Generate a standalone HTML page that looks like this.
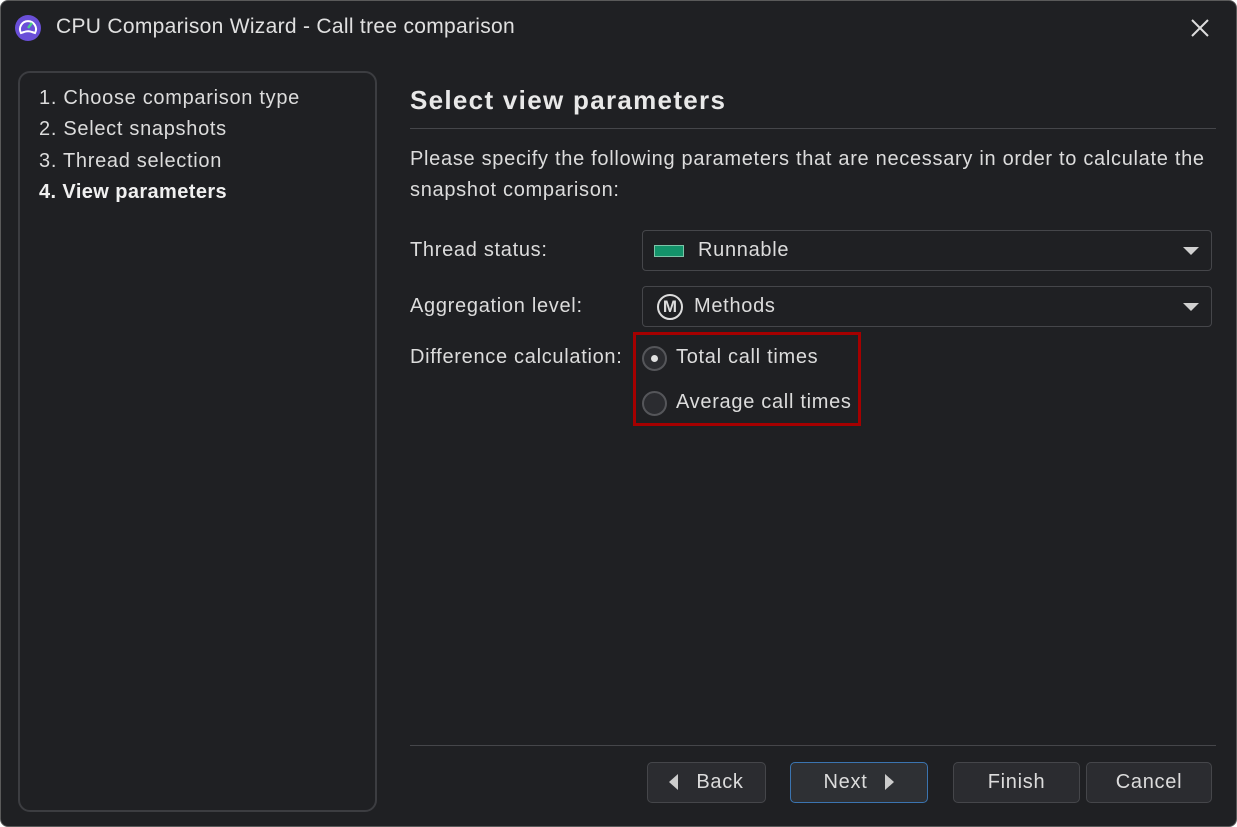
<!DOCTYPE html>
<html><head><meta charset="utf-8"><style>
*{box-sizing:border-box;margin:0;padding:0}
html,body{width:1237px;height:827px;overflow:hidden;background:#fff}
body{font-family:"Liberation Sans",sans-serif;color:#dcdcdc;font-size:20px;letter-spacing:0.7px}
.win{position:absolute;left:0;top:0;width:1237px;height:827px;background:#1f2023;border:1px solid #5a5a5a;border-radius:8px;overflow:hidden}
.abs{position:absolute;white-space:nowrap}
.left{position:absolute;left:17px;top:70px;width:359px;height:741px;border:2px solid #3c3d41;border-radius:12px}
.combo{position:absolute;left:641px;width:570px;height:41px;border:1px solid #45464a;border-radius:4px;background:#1f2023}
.arrow{position:absolute;right:12px;top:16px;width:0;height:0;border-left:8px solid transparent;border-right:8px solid transparent;border-top:8px solid #d0d0d0}
.btn{position:absolute;top:761px;height:41px;border:1px solid #45464a;border-radius:5px;background:#2b2c30;text-align:center;line-height:39px;color:#dcdcdc}
.radio{position:absolute;width:25px;height:25px;border-radius:50%;border:2px solid #55565a;background:#2b2c30}
</style></head><body><div class="win">
<svg class="abs" style="left:13px;top:13px" width="28" height="28" viewBox="0 0 28 28"><circle cx="14" cy="14" r="13" fill="#6a4fd8"/><path d="M7 19 A8 8 0 1 1 21 19 L18 18 Q14 16.5 10 18 Z" fill="none" stroke="#fff" stroke-width="2"/><path d="M14 14 L18 9" stroke="#4ad08a" stroke-width="2.4"/></svg>
<div class="abs" style="left:55px;top:14px;font-size:21px;color:#e0e0e0;letter-spacing:0.3px">CPU Comparison Wizard - Call tree comparison</div>
<svg class="abs" style="left:1189px;top:17px" width="20" height="20"><path d="M2 2L18 18M18 2L2 18" stroke="#ddd" stroke-width="2"/></svg>
<div class="left"></div>
<div class="abs" style="left:38px;top:86px">1. Choose comparison type</div>
<div class="abs" style="left:38px;top:117px">2. Select snapshots</div>
<div class="abs" style="left:38px;top:149px">3. Thread selection</div>
<div class="abs" style="left:38px;top:180px;font-weight:bold;color:#f0f0f0;letter-spacing:0.4px">4. View parameters</div>
<div class="abs" style="left:409px;top:84px;font-size:26px;font-weight:bold;color:#e8e8e8;letter-spacing:1.3px">Select view parameters</div>
<div class="abs" style="left:409px;top:127px;width:806px;height:1px;background:#45464a"></div>
<div class="abs" style="left:409px;top:143px;line-height:31px">Please specify the following parameters that are necessary in order to calculate the<br>snapshot comparison:</div>
<div class="abs" style="left:409px;top:238px">Thread status:</div>
<div class="combo" style="top:229px"><div class="abs" style="left:11px;top:14px;width:30px;height:12px;background:#13936a;border:1px solid #7cc4a8"></div><div class="abs" style="left:55px;top:8px">Runnable</div><div class="arrow"></div></div>
<div class="abs" style="left:409px;top:294px">Aggregation level:</div>
<div class="combo" style="top:285px"><div class="abs" style="left:14px;top:7px;width:26px;height:26px;border:2px solid #ddd;border-radius:50%;font-weight:bold;font-size:17px;text-align:center;line-height:22px;letter-spacing:0">M</div><div class="abs" style="left:51px;top:8px">Methods</div><div class="arrow"></div></div>
<div class="abs" style="left:409px;top:345px">Difference calculation:</div>
<div class="abs" style="left:632px;top:331px;width:228px;height:94px;border:3px solid #a50000"></div>
<div class="radio" style="left:641px;top:345px"><div class="abs" style="left:7px;top:7px;width:7px;height:7px;border-radius:50%;background:#e0e0e0"></div></div>
<div class="abs" style="left:675px;top:345px">Total call times</div>
<div class="radio" style="left:641px;top:390px"></div>
<div class="abs" style="left:675px;top:390px">Average call times</div>
<div class="abs" style="left:409px;top:744px;width:806px;height:1px;background:#45464a"></div>
<div class="btn" style="left:646px;width:119px"><span style="display:inline-block;width:0;height:0;border-top:8px solid transparent;border-bottom:8px solid transparent;border-right:9px solid #ccc;margin-right:18px;vertical-align:-2px"></span>Back</div>
<div class="btn" style="left:789px;width:138px;border-color:#3b74b0;background:#2e3034">Next<span style="display:inline-block;width:0;height:0;border-top:8px solid transparent;border-bottom:8px solid transparent;border-left:9px solid #ccc;margin-left:18px;vertical-align:-2px"></span></div>
<div class="btn" style="left:952px;width:127px">Finish</div>
<div class="btn" style="left:1085px;width:126px">Cancel</div>
</div></body></html>
